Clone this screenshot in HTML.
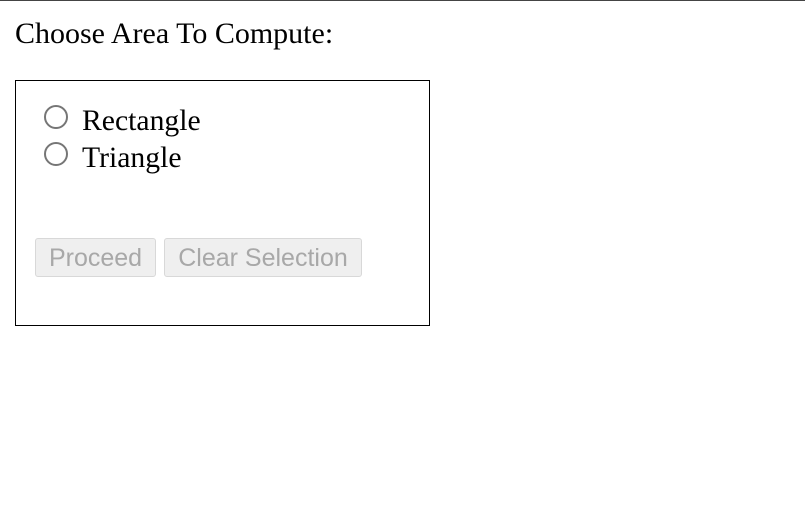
<!DOCTYPE html>
<html><head><style>
body{margin:0;width:805px;height:505px;background:#fff;position:relative;overflow:hidden;font-family:"Liberation Serif",serif;color:#000}
.top{position:absolute;left:0;top:0;width:805px;height:1px;background:#444}
.h{position:absolute;left:15px;top:16px;font-size:30px;line-height:36px;white-space:nowrap}
.box{position:absolute;left:15px;top:80px;width:413px;height:244px;border:1px solid #000}
.r{position:absolute;width:20px;height:20px;border:2px solid #767676;border-radius:50%;box-sizing:content-box}
.l{position:absolute;left:82px;font-size:29.7px;line-height:36px;white-space:nowrap}
.b{position:absolute;top:238px;height:37px;background:#efefef;border:1px solid #d8d8d8;border-radius:3px;color:#a8a8a8;font-family:"Liberation Sans",sans-serif;font-size:25px;line-height:38px;text-align:center;white-space:nowrap}
</style></head><body>
<div class="top"></div>
<div class="h">Choose Area To Compute:</div>
<div class="box"></div>
<div class="r" style="left:44px;top:105px"></div>
<div class="l" style="top:103px">Rectangle</div>
<div class="r" style="left:44px;top:142px"></div>
<div class="l" style="top:140px">Triangle</div>
<div class="b" style="left:35px;width:119px">Proceed</div>
<div class="b" style="left:164px;width:196px">Clear Selection</div>
</body></html>
